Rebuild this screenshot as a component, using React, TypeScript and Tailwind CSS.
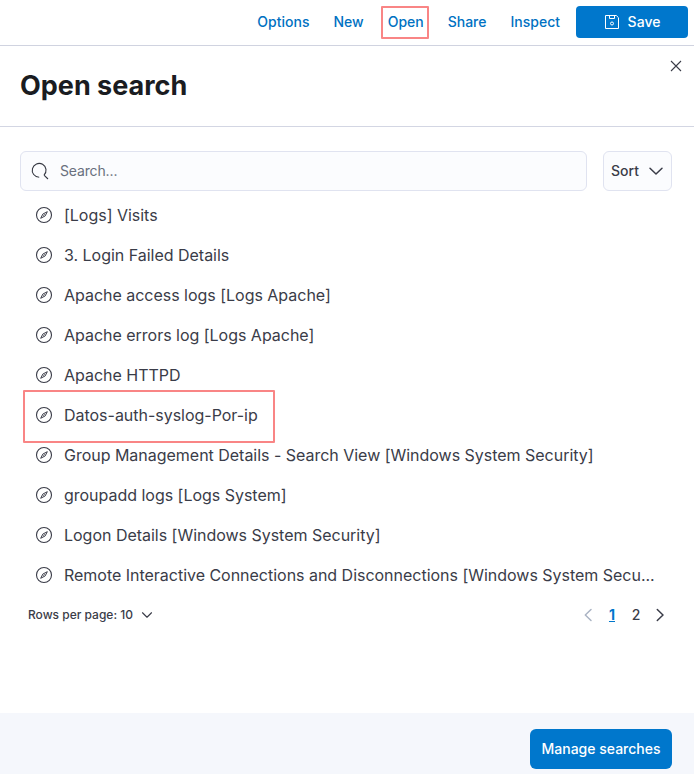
import React from 'react';

const searches = [
  '[Logs] Visits',
  '3. Login Failed Details',
  'Apache access logs [Logs Apache]',
  'Apache errors log [Logs Apache]',
  'Apache HTTPD',
  'Datos-auth-syslog-Por-ip',
  'Group Management Details - Search View [Windows System Security]',
  'groupadd logs [Logs System]',
  'Logon Details [Windows System Security]',
  'Remote Interactive Connections and Disconnections [Windows System Secu...',
];

function CompassIcon() {
  return (
    <svg width="16" height="16" viewBox="0 0 16 16" className="shrink-0 overflow-visible" fill="none" stroke="currentColor">
      <circle cx="8" cy="8" r="7.5" strokeWidth="1.1" />
      <path d="M11.3 4.7 9.2 8.9 4.7 11.3 6.8 7.1Z" strokeLinejoin="round" />
      <path d="M7.4 8.6 8.6 7.4" />
    </svg>
  );
}

function Chevron({ className, d }: { className: string; d: string }) {
  return (
    <svg viewBox="0 0 16 16" className={className} fill="none" stroke="currentColor" strokeWidth="1.5" strokeLinecap="round" strokeLinejoin="round">
      <path d={d} />
    </svg>
  );
}

export default function App() {
  return (
    <div className="flex h-[774px] w-[694px] flex-col overflow-hidden bg-white font-['Inter',sans-serif] text-[#3a3c48]">
      <nav className="flex h-[46px] shrink-0 items-start justify-end border-b border-[#d0d3e0] pt-1.5 pr-1.5 text-sm font-medium text-[#0071c2]">
        <div className="flex h-8 items-center gap-6">
          <a>Options</a>
          <a>New</a>
          <a className="relative">
            Open
            <span className="absolute -top-[6px] -left-[7px] h-[33px] w-[48px] rounded-[1px] border-2 border-[#f98585]" />
          </a>
          <a>Share</a>
          <a>Inspect</a>
        </div>
        <button className="ml-4 flex h-8 w-28 items-center justify-center gap-2 rounded bg-[#0077cc] text-white">
          <svg width="16" height="16" viewBox="0 0 16 16" fill="none" stroke="currentColor">
            <path d="M1.5 1.5h10.8l2.2 2.2v10.8h-13zM5.5 1.5v3h5v-3" />
            <circle cx="8" cy="9.5" r="1.5" />
          </svg>
          Save
        </button>
      </nav>

      <header className="flex h-[81px] shrink-0 justify-between border-b border-[#d3d6e3] pr-3 pl-5">
        <h1 className="pt-6 text-[27px] leading-8 font-bold text-[#1a1c21]">Open search</h1>
        <svg width="12" height="12" viewBox="0 0 12 12" className="mt-3.5" fill="none" stroke="currentColor" strokeWidth="1.1">
          <path d="M1 1 11 11M11 1 1 11" />
        </svg>
      </header>

      <main className="flex-1 pt-6 pr-[22px] pl-5">
        <div className="flex h-10 gap-4">
          <div className="flex flex-1 items-center gap-3 rounded-md border border-[#e0e3f0] bg-[#fbfcfe] pl-[11px] text-sm tracking-[-0.01em] text-[#69707d]">
            <svg width="16" height="16" viewBox="0 0 16 16" fill="none" stroke="#343741" strokeWidth="1.1" className="overflow-visible">
              <path d="M7.2 14.2A6.9 6.9 0 1 1 12 12.2M12 12.2L16 16" />
            </svg>
            Search...
          </div>
          <button className="flex w-[69px] items-center gap-[9px] rounded-md border border-[#e0e3f0] bg-[#fbfcfe] pl-[7px] text-sm font-medium">
            Sort
            <Chevron className="size-4 shrink-0 overflow-visible" d="M2 5.2 8 11 14 5.2" />
          </button>
        </div>
        <ul className="pl-4 pt-1">
          {searches.map((s) => (
            <li key={s} className="relative flex h-10 items-center gap-3 text-base tracking-[-0.02px]">
              <CompassIcon />
              <span className="whitespace-nowrap">{s}</span>
              {s === 'Datos-auth-syslog-Por-ip' && (
                <span className="absolute -top-[5px] -left-[13px] h-[53px] w-[252px] rounded-[1px] border-2 border-[#f98585]" />
              )}
            </li>
          ))}
        </ul>
        <div className="flex h-10 items-center justify-between pl-2">
          <button className="flex items-center gap-2 text-xs font-medium">
            Rows per page: 10
            <Chevron className="size-3" d="M2 5 8 11 14 5" />
          </button>
          <div className="flex items-center text-sm font-medium">
            <span className="flex w-6 justify-center text-[#abb4c4]"><Chevron className="size-4" d="M11 2.5 5.3 8 11 13.5" /></span>
            <span className="w-6 text-center font-bold text-[#0077cc] underline">1</span>
            <span className="w-6 text-center">2</span>
            <span className="flex w-6 justify-center"><Chevron className="size-4" d="M5.3 2.5 11 8 5.3 13.5" /></span>
          </div>
        </div>
      </main>

      <footer className="flex h-[61px] shrink-0 justify-end bg-[#f5f7fc] pt-4 pr-[22px]">
        <button className="h-10 w-[142px] rounded-md bg-[#0077cc] text-sm font-medium text-white">Manage searches</button>
      </footer>
    </div>
  );
}
